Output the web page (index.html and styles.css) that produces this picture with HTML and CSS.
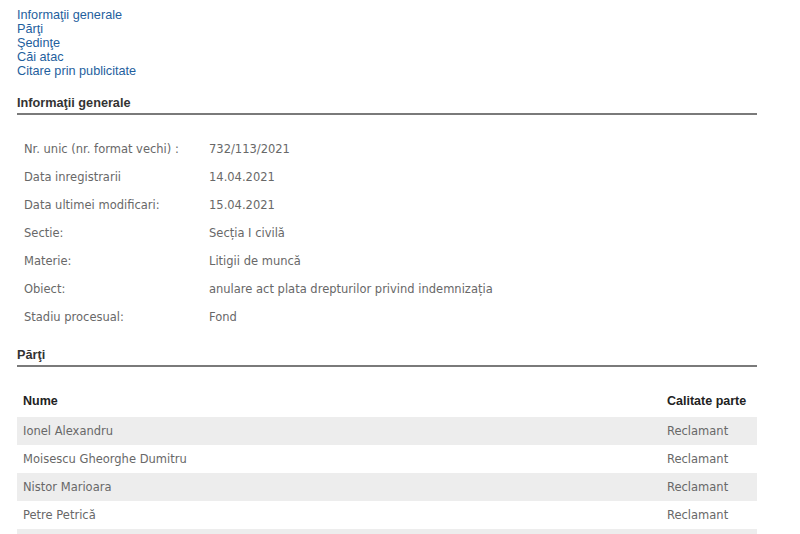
FILE: index.html
```html
<!DOCTYPE html>
<html>
<head>
<meta charset="utf-8">
<link rel="stylesheet" href="styles.css">
</head>
<body>
<div class="page">
  <nav class="toc">
    <a href="#info">Informaţii generale</a>
    <a href="#parti">Părţi</a>
    <a href="#sedinte">Şedinţe</a>
    <a href="#cai">Căi atac</a>
    <a href="#citare">Citare prin publicitate</a>
  </nav>

  <h2 class="section-title" id="info">Informaţii generale</h2>
  <div class="info">
    <div class="info-row"><span class="info-label">Nr. unic (nr. format vechi) :</span><span class="info-value">732/113/2021</span></div>
    <div class="info-row"><span class="info-label">Data inregistrarii</span><span class="info-value">14.04.2021</span></div>
    <div class="info-row"><span class="info-label">Data ultimei modificari:</span><span class="info-value">15.04.2021</span></div>
    <div class="info-row"><span class="info-label">Sectie:</span><span class="info-value">Secția I civilă</span></div>
    <div class="info-row"><span class="info-label">Materie:</span><span class="info-value">Litigii de muncă</span></div>
    <div class="info-row"><span class="info-label">Obiect:</span><span class="info-value">anulare act plata drepturilor privind indemnizația</span></div>
    <div class="info-row"><span class="info-label">Stadiu procesual:</span><span class="info-value">Fond</span></div>
  </div>

  <h2 class="section-title" id="parti">Părţi</h2>
  <div class="parties">
    <div class="p-row p-head"><span class="p-name">Nume</span><span class="p-role">Calitate parte</span></div>
    <div class="p-row odd"><span class="p-name">Ionel Alexandru</span><span class="p-role">Reclamant</span></div>
    <div class="p-row"><span class="p-name">Moisescu Gheorghe Dumitru</span><span class="p-role">Reclamant</span></div>
    <div class="p-row odd"><span class="p-name">Nistor Marioara</span><span class="p-role">Reclamant</span></div>
    <div class="p-row"><span class="p-name">Petre Petrică</span><span class="p-role">Reclamant</span></div>
    <div class="p-row odd"></div>
  </div>
</div>
</body>
</html>
```

FILE: styles.css
```css
html, body {
  margin: 0;
  padding: 0;
  background: #fff;
}
.page {
  padding: 8px 43px 0 17px;
  font-family: "Liberation Sans", Arial, sans-serif;
  font-size: 12.7px;
}
.toc {
  display: flex;
  flex-direction: column;
  line-height: 14px;
}
.toc a {
  color: #1f5f9e;
  text-decoration: none;
  width: max-content;
}
.section-title {
  margin: 0;
  font-size: 12.7px;
  font-weight: bold;
  color: #333;
  line-height: 16px;
  padding: 17px 0 2px 0;
  border-bottom: 2px solid #7a7a7a;
}
#parti { padding-top: 16px; }
.info {
  padding: 20px 0 0 0;
  font-family: "DejaVu Sans", Tahoma, sans-serif;
  font-size: 11.5px;
  color: #686868;
}
.info-row {
  display: flex;
  height: 28px;
  align-items: center;
}
.info-label {
  width: 185px;
  padding-left: 7px;
}
.info-value {
  flex: 1;
}
.parties {
  padding-top: 20px;
}
.p-row {
  display: flex;
  height: 28px;
  align-items: center;
  font-family: "DejaVu Sans", Tahoma, sans-serif;
  font-size: 11.5px;
  color: #686868;
}
.p-row.odd { background: #ededed; }
.p-head {
  height: 30px;
  padding-bottom: 2px;
  box-sizing: border-box;
  font-family: "Liberation Sans", Arial, sans-serif;
  font-size: 12.5px;
  font-weight: bold;
  color: #222;
}
.p-name {
  flex: 1;
  padding-left: 6px;
}
.p-role {
  width: 90px;
}
```
